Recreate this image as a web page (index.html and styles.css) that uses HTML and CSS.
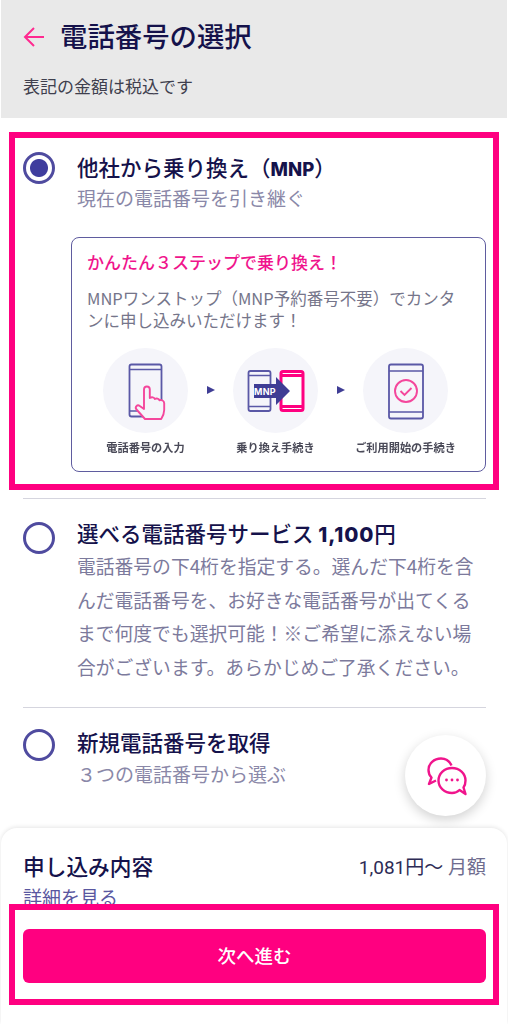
FILE: index.html
```html
<!DOCTYPE html>
<html lang="ja">
<head>
<meta charset="utf-8">
<title>電話番号の選択</title>
<link rel="stylesheet" href="styles.css">
</head>
<body>
<div class="page">
  <header class="head">
    <div class="head-row">
      <svg class="back" viewBox="0 0 22 22" width="22" height="22"><path d="M21 11H2M11 2l-9 9 9 9" fill="none" stroke="#ff2a90" stroke-width="2"/></svg>
      <h1 class="page-title">電話番号の選択</h1>
    </div>
    <p class="tax">表記の金額は税込です</p>
  </header>

  <section class="mark-box option-first">
    <div class="option">
      <span class="radio radio-on"></span>
      <div>
        <div class="opt-title">他社から乗り換え（<b class="latin">MNP</b>）</div>
        <div class="opt-sub">現在の電話番号を引き継ぐ</div>
      </div>
    </div>
    <div class="card">
      <div class="card-title">かんたん３ステップで乗り換え！</div>
      <p class="card-text">MNPワンストップ（MNP予約番号不要）でカンタンに申し込みいただけます！</p>
      <div class="steps">
        <div class="step">
          <svg class="step-icon" viewBox="0 0 85 85" width="85" height="85">
            <circle cx="42.5" cy="42.5" r="42.5" fill="#f5f5fa"/>
            <rect x="26.5" y="16.5" width="32" height="52" rx="2" fill="none" stroke="#5a58a6" stroke-width="1.8"/>
            <path d="M26.5 21.5h32M26.5 63h32" stroke="#5a58a6" stroke-width="1.6"/>
            <path d="M42 71l-8.500-9.500c-2-2.500.8-5.500 3.300-3.500l4.200 3V41.500c0-4 5.800-4 5.800 0V50c2-1.300 4.300-.8 5 1 1.800-1 4-.4 4.600 1.300 2-.7 4.800.3 4.800 3V62c0 3-1.200 6-3 9z" fill="#f5f5fa" stroke="#f4479c" stroke-width="1.9" stroke-linejoin="round"/>
          </svg>
          <span class="step-label">電話番号の入力</span>
        </div>
        <span class="tri"></span>
        <div class="step">
          <svg class="step-icon" viewBox="0 0 85 85" width="85" height="85">
            <circle cx="42.500" cy="42.500" r="42.500" fill="#f5f5fa"/>
            <rect x="15.500" y="23" width="22" height="40" rx="2" fill="none" stroke="#5a58a6" stroke-width="1.800"/>
            <path d="M15.500 27.500h22M15.500 58.500h22" stroke="#5a58a6" stroke-width="1.500"/>
            <rect x="48" y="23.500" width="22" height="39" rx="2" fill="#fff" stroke="#ff0080" stroke-width="3"/>
            <path d="M48 27.500h22M48 58.500h22" stroke="#ff0080" stroke-width="3"/>
            <path d="M21 36h22v-7l14 14-14 14v-7H21z" fill="#3f3d95"/>
            <text class="mnp-mark" x="32" y="46.500">MNP</text>
          </svg>
          <span class="step-label">乗り換え手続き</span>
        </div>
        <span class="tri"></span>
        <div class="step">
          <svg class="step-icon" viewBox="0 0 85 85" width="85" height="85">
            <circle cx="42.500" cy="42.500" r="42.500" fill="#f5f5fa"/>
            <rect x="26" y="16.500" width="34" height="54" rx="2" fill="none" stroke="#5a58a6" stroke-width="1.800"/>
            <path d="M26 23h34M26 64h34" stroke="#5a58a6" stroke-width="1.500"/>
            <circle cx="43" cy="43" r="11" fill="none" stroke="#f4479c" stroke-width="1.900"/>
            <path d="M37.500 43l4 4 7-7" fill="none" stroke="#f4479c" stroke-width="1.900"/>
          </svg>
          <span class="step-label">ご利用開始の手続き</span>
        </div>
      </div>
    </div>
  </section>

  <hr class="rule rule-one">

  <section class="option option-two">
    <span class="radio radio-low"></span>
    <div>
      <div class="opt-title">選べる電話番号サービス <b class="latin latin-fee">1,100</b>円</div>
      <div class="opt-desc">電話番号の下4桁を指定する。選んだ下4桁を含んだ電話番号を、お好きな電話番号が出てくるまで何度でも選択可能！※ご希望に添えない場合がございます。あらかじめご了承ください。</div>
    </div>
  </section>

  <hr class="rule">

  <section class="option option-three">
    <span class="radio radio-mid"></span>
    <div>
      <div class="opt-title">新規電話番号を取得</div>
      <div class="opt-sub opt-sub-three">３つの電話番号から選ぶ</div>
    </div>
  </section>

  <button class="chat" aria-label="チャット">
    <svg viewBox="0 0 81 81" width="81" height="81">
      <path d="M46.500 30.500C44.500 26 40.500 23.500 36 23.500 29 23.500 23.500 28.500 23.500 35c0 3 1 5.500 3 7.500L24 49l7-3.500" fill="none" stroke="#f0148c" stroke-width="2.400" stroke-linejoin="round"/>
      <path d="M54.500 55l6 4-2-6.500c1.500-2 2-4.500 2-7 0-7-6-12.500-13.500-12.500S33.500 38.500 33.500 45.500 39.500 58 47 58c2.500 0 5.500-1 7.500-3z" fill="none" stroke="#f0148c" stroke-width="2.400" stroke-linejoin="round"/>
      <circle cx="41.500" cy="45" r="1.400" fill="#f0148c"/><circle cx="47" cy="45" r="1.400" fill="#f0148c"/><circle cx="52.500" cy="45" r="1.400" fill="#f0148c"/>
    </svg>
  </button>

  <footer class="sheet">
    <div class="sheet-row">
      <span class="sheet-title">申し込み内容</span>
      <span class="price">1,081円〜 <span class="price-unit">月額</span></span>
    </div>
    <div class="detail">詳細を見る</div>
    <div class="mark-box action">
      <button class="next">次へ進む</button>
    </div>
  </footer>
</div>
</body>
</html>
```
FILE: styles.css
```css
* { box-sizing: border-box; }
html, body { margin: 0; padding: 0; background: #fff; }
body {
  font-family: "Noto Sans CJK JP", "Noto Sans", sans-serif;
  color: #15124b;
}
.page {
  position: relative;
  width: 508px;
  height: 1024px;
  overflow: hidden;
  background: #fff;
}
.head {
  height: 118px;
  margin: 0 1px;
  padding: 17px 22px 0;
  background: #e9e9e9;
}
.head-row { display: flex; align-items: center; gap: 15px; height: 36px; }
.back { flex: none; margin-top: 4px; }
.page-title { margin: 0; font-size: 27.400px; line-height: 36px; font-weight: 500; color: #15124b; }
.tax { margin: 17px 0 0; font-size: 17px; line-height: 32px; color: #3f3f4e; }

.mark-box { border: 6px solid #ff0080; }
.option-first {
  margin: 14px 9px 0;
  height: 358px;
  padding: 14px 7px 0 8px;
}
.option { display: flex; gap: 22px; }
.radio {
  flex: none;
  width: 32px;
  height: 32px;
  border: 3px solid #4f4b9f;
  border-radius: 50%;
  background: #fff;
}
.radio-on { background: radial-gradient(circle, #3f3d9e 0 8.500px, #fff 9.500px); }
.radio-low { margin-top: 4px; }
.radio-mid { margin-top: 2px; }
.opt-title { font-size: 21.500px; line-height: 30px; font-weight: 500; color: #15124b; white-space: nowrap; }
.latin { font-family: Inter, Roboto, sans-serif; font-weight: 800; font-size: 18.500px; }
.latin-fee { font-size: 20.500px; letter-spacing: .8px; }
.opt-sub { margin-top: -1px; font-size: 19px; line-height: 30px; color: #8a88a8; white-space: nowrap; }
.opt-sub-three { margin-top: 2px; }
.card {
  height: 235px;
  margin: 24px 0 0 48px;
  padding: 12px 15px 0;
  border: 1.500px solid #5f5c9f;
  border-radius: 8px;
}
.card-title { font-size: 17px; line-height: 24px; font-weight: 500; color: #f0148c; white-space: nowrap; }
.card-text { margin: 13px 0 0; font-size: 16.500px; line-height: 22px; color: #75758a; }
.steps { display: flex; align-items: flex-start; gap: 6px; margin: 17px 0 0 3.500px; }
.step { display: flex; flex-direction: column; align-items: center; width: 110px; flex: none; }
.step-icon { display: block; }
.step-label { margin-top: 4px; font-size: 11.200px; line-height: 20px; font-weight: 700; color: #4a4a58; white-space: nowrap; filter: blur(0.4px); }
.tri {
  flex: none;
  width: 0;
  height: 0;
  margin-top: 38px;
  border-left: 8px solid #3f3d95;
  border-top: 4.500px solid transparent;
  border-bottom: 4.500px solid transparent;
}
.mnp-mark { font-family: Inter, Roboto, sans-serif; font-size: 9px; font-weight: 700; fill: #fff; text-anchor: middle; letter-spacing: .3px; }

.rule { margin: 0 22px 0 23px; height: 1px; border: 0; background: #d5d5de; }
.rule-one { margin-top: 8px; }
.option-two { padding: 19px 22px 23.600px 23px; }
.opt-desc { margin-top: -1px; font-size: 18.800px; line-height: 33.600px; color: #7c7a9c; width: 400px; }
.option-three { padding: 19px 22px 0 23px; }

.chat {
  position: absolute;
  left: 405px;
  top: 735px;
  width: 81px;
  height: 81px;
  padding: 0;
  border: 0;
  border-radius: 50%;
  background: #fff;
  box-shadow: 0 4px 12px rgba(0, 0, 0, .18);
}
.chat svg { display: block; }

.sheet {
  position: absolute;
  left: 1px;
  right: 1px;
  top: 828px;
  height: 196px;
  padding-top: 20px;
  background: #fff;
  border-radius: 16px 16px 0 0;
  box-shadow: 0 -1px 4px rgba(0, 0, 0, .1);
}
.sheet-row { display: flex; justify-content: space-between; align-items: center; height: 34px; padding: 0 21px 0 22px; }
.sheet-title { font-size: 21.700px; font-weight: 500; color: #15124b; }
.price { font-family: Roboto, "Noto Sans CJK JP", sans-serif; font-size: 19px; color: #2d2b55; }
.price-unit { color: #6f6d8f; }
.detail { height: 22px; padding-left: 22px; overflow: hidden; font-size: 19px; line-height: 30px; color: #5a57a0; }
.action { margin: 0 8px; height: 101px; padding: 19px 7px 0 8px; background: #fff; }
.next {
  display: block;
  width: 100%;
  height: 54px;
  padding: 0 0 3px;
  border: 0;
  border-radius: 6px;
  background: #ff0080;
  color: #fff;
  font-family: inherit;
  font-size: 18.500px;
  font-weight: 500;
}
```
